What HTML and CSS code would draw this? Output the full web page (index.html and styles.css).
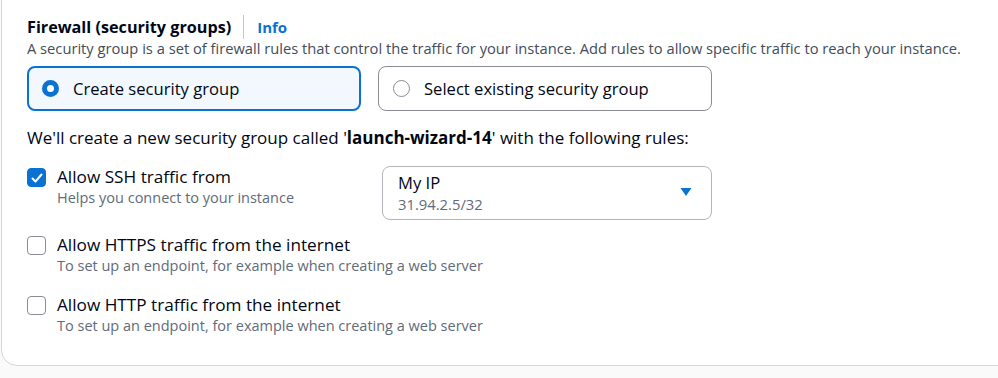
FILE: index.html
```html
<!DOCTYPE html>
<html lang="en">
<head>
  <meta charset="UTF-8" />
  <title>Firewall (security groups)</title>
  <link rel="stylesheet" href="styles.css">
</head>
<body>
  <div class="card">
    <div class="field-header">
      <h3>Firewall (security groups)</h3>
      <span class="divider"></span>
      <a class="info-link" href="#">Info</a>
    </div>
    <p class="description">A security group is a set of firewall rules that control the traffic for your instance. Add rules to allow specific traffic to reach your instance.</p>

    <div class="tiles">
      <label class="tile selected">
        <span class="radio checked"></span>
        <span>Create security group</span>
      </label>
      <label class="tile">
        <span class="radio"></span>
        <span>Select existing security group</span>
      </label>
    </div>

    <p class="note">We'll create a new security group called '<b>launch-wizard-14</b>' with the following rules:</p>

    <div class="rule rule-ssh">
      <label class="check-row">
        <span class="checkbox checked">
          <svg viewBox="0 0 14 14" width="14" height="14"><polyline points="2.5,7.5 5.5,10.5 11.5,3.5" fill="none" stroke="#fff" stroke-width="2" stroke-linecap="round" stroke-linejoin="round"/></svg>
        </span>
        <span class="check-text">
          <span class="check-label">Allow SSH traffic from</span>
          <span class="check-desc">Helps you connect to your instance</span>
        </span>
      </label>
      <div class="select">
        <div class="select-value">
          <span class="select-label">My IP</span>
          <span class="select-sub">31.94.2.5/32</span>
        </div>
        <svg class="caret" viewBox="0 0 12 10" width="12" height="10"><polygon points="0.5,1 11.5,1 6,9" fill="#0972d3"/></svg>
      </div>
    </div>

    <div class="rule rule-https">
      <label class="check-row">
        <span class="checkbox"></span>
        <span class="check-text">
          <span class="check-label">Allow HTTPS traffic from the internet</span>
          <span class="check-desc">To set up an endpoint, for example when creating a web server</span>
        </span>
      </label>
    </div>

    <div class="rule">
      <label class="check-row">
        <span class="checkbox"></span>
        <span class="check-text">
          <span class="check-label">Allow HTTP traffic from the internet</span>
          <span class="check-desc">To set up an endpoint, for example when creating a web server</span>
        </span>
      </label>
    </div>
  </div>
</body>
</html>
```

FILE: styles.css
```css
html, body {
  overflow: hidden;
}
body {
  margin: 0;
  background: #fafafa;
  font-family: "Open Sans", "Noto Sans", Arial, sans-serif;
  color: #000716;
}
.card {
  margin: -20px -200px 0 1px;
  padding: 34px 24px 29px 25px;
  background: #fff;
  border: 1px solid #d5d5da;
  border-radius: 16px;
}
.field-header {
  display: flex;
  align-items: center;
  height: 23px;
}
.field-header h3 {
  margin: 0;
  font-size: 16.2px;
  font-weight: 700;
}
.divider {
  width: 1px;
  height: 24px;
  background: #c6c6cd;
  margin: 0 13px 0 12px;
}
.info-link {
  color: #0972d3;
  font-weight: 700;
  font-size: 15px;
  text-decoration: none;
}
.description {
  margin: 0;
  font-size: 14.7px;
  line-height: 20px;
  color: #414d5c;
}
.tiles {
  display: flex;
  gap: 17px;
  margin-top: 8px;
}
.tile {
  box-sizing: border-box;
  width: 334px;
  height: 45px;
  display: flex;
  align-items: center;
  gap: 14px;
  padding: 0 14px;
  border: 1px solid #8c8c94;
  border-radius: 8px;
  font-size: 16.6px;
}
.tile.selected {
  border: 2px solid #0972d3;
  background: #f2f8fd;
  padding: 0 13px;
}
.radio {
  box-sizing: border-box;
  width: 17px;
  height: 17px;
  border-radius: 50%;
  border: 1.5px solid #8c8c94;
  background: #fff;
  flex-shrink: 0;
}
.radio.checked {
  border: 5px solid #0972d3;
}
.note {
  margin: 17px 0 0;
  font-size: 17px;
  line-height: 20px;
}
.rule {
  display: flex;
  margin-top: 18px;
}
.rule-ssh {
  margin-top: 18px;
}
.rule-https {
  margin-top: 14px;
}
.check-row {
  display: flex;
  gap: 11px;
  width: 355px;
  white-space: nowrap;
}
.checkbox {
  box-sizing: border-box;
  width: 19px;
  height: 19px;
  margin-top: 2px;
  border: 1.5px solid #8c8c94;
  border-radius: 4px;
  background: #fff;
  flex-shrink: 0;
  display: flex;
  align-items: center;
  justify-content: center;
}
.checkbox.checked {
  background: #0972d3;
  border-color: #0972d3;
}
.check-text {
  display: flex;
  flex-direction: column;
}
.check-label {
  font-size: 17.2px;
  line-height: 22px;
}
.check-desc {
  font-size: 14.5px;
  line-height: 20px;
  color: #5f6b7a;
}
.select {
  box-sizing: border-box;
  width: 330px;
  height: 54px;
  display: flex;
  align-items: center;
  justify-content: space-between;
  padding: 0 19px 0 15px;
  border: 1px solid #b4b4bb;
  border-radius: 8px;
}
.select-value {
  display: flex;
  flex-direction: column;
}
.select-label {
  font-size: 16.6px;
  line-height: 22px;
}
.select-sub {
  font-size: 14.8px;
  line-height: 20px;
  color: #5f6b7a;
}
.caret {
  margin-top: -3px;
}
```
